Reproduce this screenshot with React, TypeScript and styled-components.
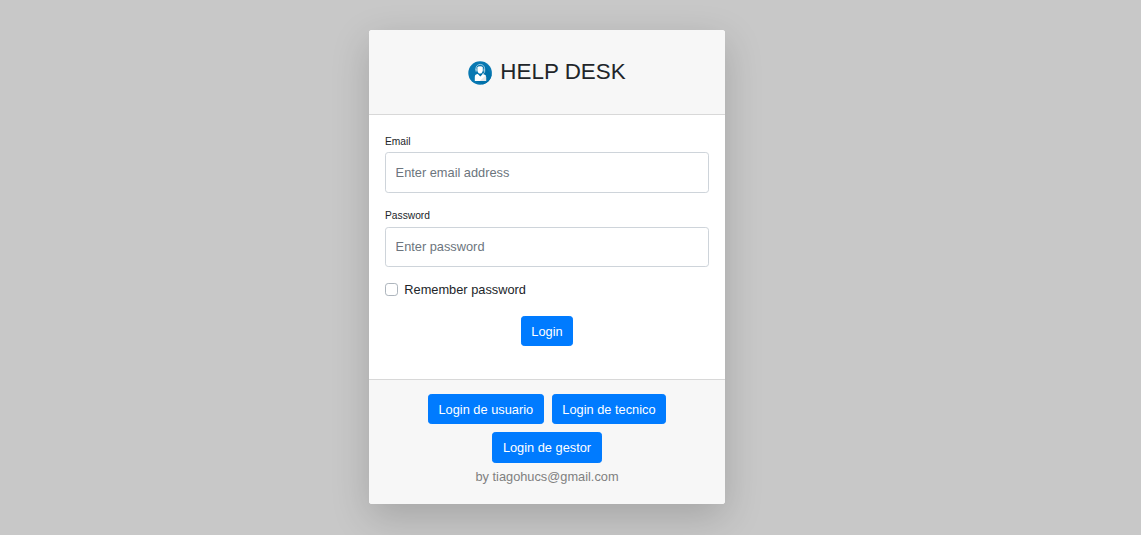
import React from "react";
import styled, { createGlobalStyle } from "styled-components";

const GlobalStyle = createGlobalStyle`
  *, *::before, *::after { box-sizing: border-box; }
  html { font-size: 12.8px; }
  body {
    margin: 0;
    background: #c8c8c8;
    color: #212529;
    font-family: "Liberation Sans", Arial, sans-serif;
    font-size: 1rem;
    line-height: 1.5;
    overflow: hidden;
  }
`;

const Page = styled.main`
  display: flex;
  justify-content: center;
  align-items: flex-start;
  width: 1094px;
  min-height: 535px;
  padding-top: 30px;
`;

const Card = styled.section`
  display: flex;
  flex-direction: column;
  width: 356px;
  height: 474px;
  background: #fff;
  border-radius: 3.2px;
  box-shadow: 0 12.8px 38.4px rgba(0, 0, 0, 0.175);
  overflow: hidden;
`;

const Header = styled.header`
  display: flex;
  justify-content: center;
  align-items: center;
  gap: 8px;
  height: 85px;
  background: #f7f7f7;
  border-bottom: 1px solid #d8d8d8;
`;

const Logo = styled.svg`
  width: 24px;
  height: 24px;
  margin-top: 1px;
`;

const Title = styled.h3`
  margin: 0;
  font-size: 22.4px;
  font-weight: 400;
  line-height: 1.2;
`;

const Body = styled.form`
  display: flex;
  flex-direction: column;
  flex: 1;
  padding: 18.8px 16px 0;
`;

const Field = styled.div`
  display: flex;
  flex-direction: column;
  gap: 3.2px;
  margin-bottom: 15.5px;
`;

const Label = styled.label`
  font-size: 10.24px;
  line-height: 15.36px;
`;

const Input = styled.input`
  width: 100%;
  height: 40.4px;
  padding: 0 9.6px;
  border: 1px solid #ced4da;
  border-radius: 3.2px;
  background: #fff;
  color: #495057;
  font: inherit;
  outline: none;
  &::placeholder { color: #6c757d; opacity: 1; }
`;

const CheckRow = styled.label`
  display: flex;
  align-items: center;
  gap: 6.3px;
  height: 19.2px;
  margin-top: -2.8px;
`;

const Checkbox = styled.input`
  appearance: none;
  width: 13px;
  height: 13px;
  margin: 0;
  border: 1px solid #adb5bd;
  border-radius: 3.2px;
  background: #fff;
`;

const Actions = styled.div`
  display: flex;
  justify-content: center;
  margin-top: 16.8px;
`;

const Button = styled.button`
  height: 30.4px;
  padding: 4.8px 9.6px 4.4px;
  border: 1px solid #007bff;
  border-radius: 3.2px;
  background: #007bff;
  color: #fff;
  font: inherit;
  line-height: 1.5;
  white-space: nowrap;
  cursor: pointer;
`;

const Footer = styled.footer`
  display: flex;
  flex-direction: column;
  align-items: center;
  height: 125px;
  padding-top: 14px;
  background: #f7f7f7;
  border-top: 1px solid #d8d8d8;
`;

const ProfileButtons = styled.div`
  display: flex;
  flex-wrap: wrap;
  justify-content: center;
  gap: 7.8px 8px;
  width: 300px;
`;

const Credit = styled.div`
  margin-top: 4.6px;
  color: #808080;
`;

const SupportIcon = () => (
  <Logo viewBox="0 0 24 24" aria-hidden="true">
    <circle cx="12.1" cy="12" r="11.8" fill="#0878b2" />
    <path d="M16.5 4.5L23.6 14A11.8 11.8 0 0 1 15 23.4L8 19.9Z" fill="#0071aa" />
    <path
      d="M7.9 9V7.8C7.9 5.2 9.7 3.4 12.2 3.4S16.7 5.2 16.7 7.8V10.2C16.7 11.8 15.5 13 14 13.2"
      fill="none"
      stroke="#a5cfe3"
      strokeWidth="0.9"
    />
    <path d="M9.4 6.6Q9.8 5.2 12.1 5.2T14.8 6.6V9.5Q14.4 12.6 12.1 12.6T9.4 9.5Z" fill="#fff" />
    <path d="M7.5 7.6h1.3v3H7.5zM15.5 7.6h1.3v3h-1.3z" fill="#a5cfe3" />
    <path
      d="M6.8 19.9V15.7Q6.8 13.8 8.6 13.3L9.8 13L12.3 15.5L14.8 13L16.2 13.5Q18.1 14 18.1 15.9V19.9Z"
      fill="#fff"
    />
    <path d="M12.3 19.4L17.6 14.4Q18.1 14.9 18.1 15.9V19.9H12Z" fill="#e3e7e9" />
  </Logo>
);

const profiles = ["Login de usuario", "Login de tecnico", "Login de gestor"];

export default function App() {
  return (
    <>
      <GlobalStyle />
      <Page>
        <Card>
          <Header>
            <SupportIcon />
            <Title>HELP DESK</Title>
          </Header>
          <Body onSubmit={(e) => e.preventDefault()}>
            <Field>
              <Label htmlFor="email">Email</Label>
              <Input id="email" type="email" placeholder="Enter email address" />
            </Field>
            <Field>
              <Label htmlFor="password">Password</Label>
              <Input id="password" type="password" placeholder="Enter password" />
            </Field>
            <CheckRow>
              <Checkbox type="checkbox" />
              Remember password
            </CheckRow>
            <Actions>
              <Button type="submit">Login</Button>
            </Actions>
          </Body>
          <Footer>
            <ProfileButtons>
              {profiles.map((profile) => (
                <Button key={profile} type="button">
                  {profile}
                </Button>
              ))}
            </ProfileButtons>
            <Credit>by tiagohucs@gmail.com</Credit>
          </Footer>
        </Card>
      </Page>
    </>
  );
}
